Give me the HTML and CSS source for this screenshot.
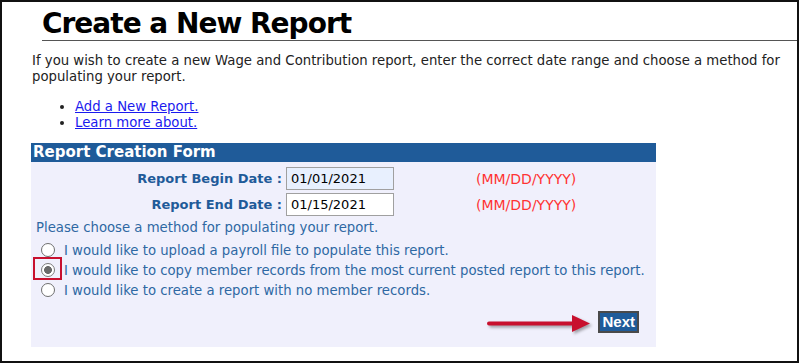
FILE: index.html
```html
<!DOCTYPE html>
<html lang="en">
<head>
<meta charset="utf-8">
<title>Create a New Report</title>
<link rel="stylesheet" href="styles.css">
</head>
<body>
<div class="frame">
  <h1 class="title">Create a New Report</h1>
  <div class="content">
    <p class="intro">If you wish to create a new Wage and Contribution report, enter the correct date range and choose a method for populating your report.</p>
    <ul class="links">
      <li><a href="#">Add a New Report.</a></li>
      <li><a href="#">Learn more about.</a></li>
    </ul>
    <div class="form">
      <div class="form-head">Report Creation Form</div>
      <div class="form-body">
        <div class="dates">
          <label class="date-label" for="begin">Report Begin Date :</label>
          <div class="date-cell"><input id="begin" class="date-input autofill" type="text" value="01/01/2021"></div>
          <span class="hint">(MM/DD/YYYY)</span>
          <label class="date-label" for="end">Report End Date :</label>
          <div class="date-cell"><input id="end" class="date-input" type="text" value="01/15/2021"></div>
          <span class="hint">(MM/DD/YYYY)</span>
        </div>
        <p class="prompt">Please choose a method for populating your report.</p>
        <div class="options">
          <label class="option"><input class="radio" type="radio" name="method">I would like to upload a payroll file to populate this report.</label>
          <label class="option"><input class="radio" type="radio" name="method" checked>I would like to copy member records from the most current posted report to this report.</label>
          <label class="option"><input class="radio" type="radio" name="method">I would like to create a report with no member records.</label>
        </div>
        <div class="actions"><button class="next" type="button">Next</button></div>
      </div>
      <span class="highlight"></span>
      <svg class="arrow" width="108" height="26" viewBox="0 0 108 26">
        <line x1="3" y1="11.5" x2="88" y2="11.5" stroke="#c8102e" stroke-width="4" stroke-linecap="round"/>
        <polygon points="86,3 104,11.5 86,20" fill="#c8102e"/>
      </svg>
    </div>
  </div>
</div>
</body>
</html>
```
FILE: styles.css
```css
html, body {
  margin: 0;
  padding: 0;
  background: #ffffff;
}

.frame {
  width: 799px;
  height: 363px;
  box-sizing: border-box;
  border: 2px solid #111111;
  font-family: "DejaVu Sans", Verdana, sans-serif;
  color: #222222;
  overflow: hidden;
}

.title {
  margin: 0 0 0 40px;
  padding-top: 6px;
  font-size: 28px;
  line-height: 32px;
  letter-spacing: -1px;
  font-weight: bold;
  color: #000000;
  border-bottom: 1px solid #555555;
}

.content {
  padding: 0 0 0 30px;
}

.intro {
  margin: 12px 0 0;
  font-size: 13.25px;
  line-height: 16px;
}

.links {
  margin: 14px 0 0;
  padding-left: 43px;
  font-size: 13.25px;
  line-height: 16px;
}

.links a {
  color: #1a1aee;
}

.form {
  position: relative;
  margin: 12px 0 0 -1px;
  width: 625px;
  background: #f0f0fc;
}

.form-head {
  background: #1f5b99;
  color: #ffffff;
  font-weight: bold;
  font-size: 15px;
  line-height: 19px;
  padding-left: 2px;
}

.form-body {
  padding: 5px 17px 14px 0;
}

.dates {
  display: grid;
  grid-template-columns: 251px 186px auto;
  column-gap: 4px;
  row-gap: 3px;
  align-items: center;
}

.date-label {
  text-align: right;
  font-weight: bold;
  font-size: 13px;
  color: #1f5b99;
}

.date-cell {
  display: flex;
}

.date-input {
  width: 108px;
  height: 23px;
  box-sizing: border-box;
  border: 1px solid #a0a0a0;
  padding: 0 4px;
  font-family: "DejaVu Sans", Verdana, sans-serif;
  font-size: 13px;
  color: #000000;
  background: #ffffff;
}

.date-input.autofill {
  background: #e8f0fe;
}

.hint {
  color: #ff3333;
  font-size: 14px;
}

.prompt {
  margin: 4px 0 0 5px;
  font-size: 13.25px;
  line-height: 16px;
  color: #2e68a3;
}

.options {
  margin-top: 4px;
  margin-right: -17px;
}

.option {
  display: flex;
  align-items: center;
  height: 20px;
  font-size: 13.25px;
  white-space: nowrap;
  color: #2e68a3;
}

.radio {
  appearance: none;
  -webkit-appearance: none;
  width: 14px;
  height: 14px;
  margin: 0 9px 0 10px;
  box-sizing: border-box;
  border: 1px solid #6f6f6f;
  border-radius: 50%;
  background: #ffffff;
  flex: none;
}

.radio:checked {
  border-color: #7a7a7a;
  background: radial-gradient(circle, #6a6a6a 0 3.6px, #ffffff 4.2px);
}

.actions {
  display: flex;
  justify-content: flex-end;
  margin-top: 11px;
}

.next {
  height: 22px;
  box-sizing: border-box;
  padding: 0 2px;
  border: 2px solid #4a4a4a;
  background: #1f5b99;
  color: #ffffff;
  font-family: "Liberation Sans", Arial, sans-serif;
  font-weight: bold;
  font-size: 15px;
  line-height: 18px;
}

.highlight {
  position: absolute;
  left: 2px;
  top: 114px;
  width: 29px;
  height: 23px;
  box-sizing: border-box;
  border: 2px solid #c8102e;
}

.arrow {
  position: absolute;
  left: 455px;
  top: 169px;
  filter: drop-shadow(2px 2px 1.5px rgba(0, 0, 0, 0.35));
}
```
